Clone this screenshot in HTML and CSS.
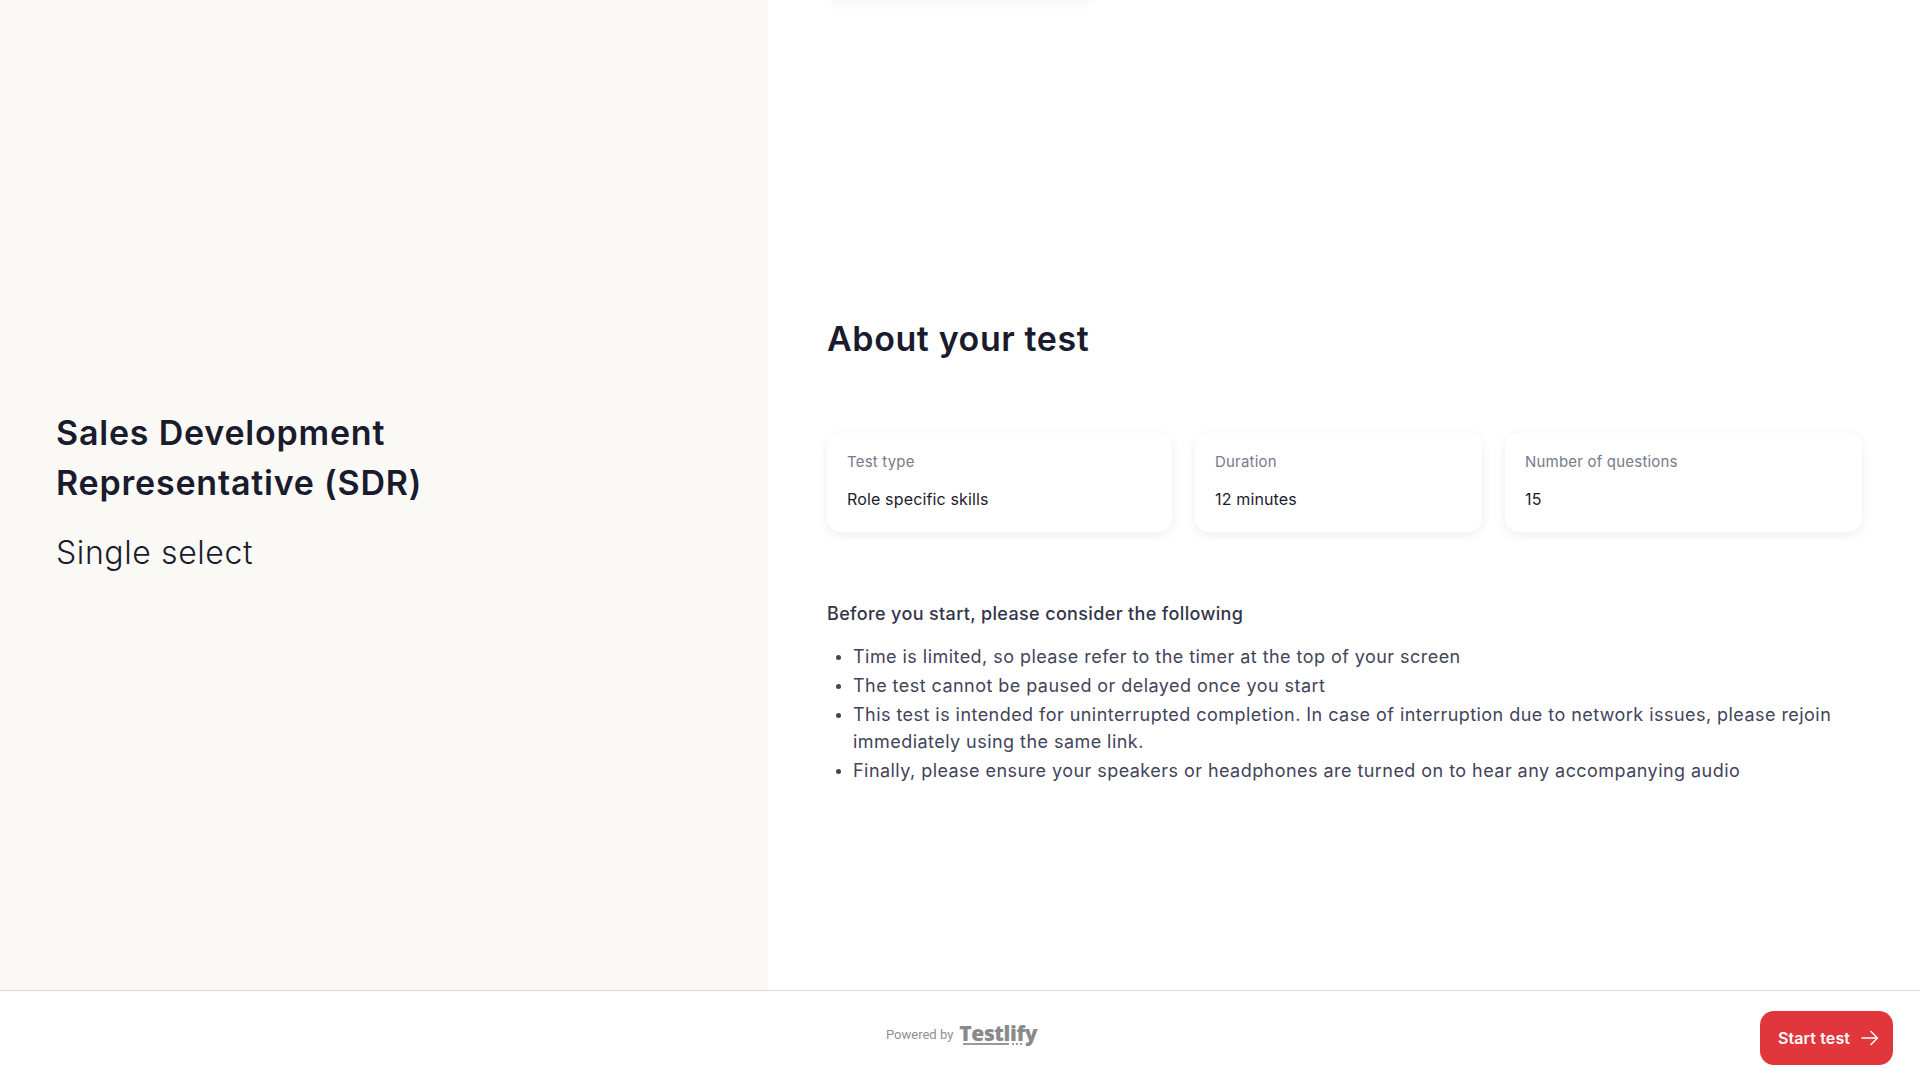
FILE: index.html
```html
<!DOCTYPE html>
<html lang="en">
<head>
    <meta charset="UTF-8">
    <title>About your test</title>
    <link rel="stylesheet" href="styles.css">
</head>
<body>
    <div class="main">
        <div class="side">
            <h2>Sales Development Representative (SDR)</h2>
            <p>Single select</p>
        </div>
        <div class="content">
            <div class="top-shadow"></div>
            <h1>About your test</h1>
            <div class="cards">
                <div class="card">
                    <span class="label">Test type</span>
                    <span class="value">Role specific skills</span>
                </div>
                <div class="card">
                    <span class="label">Duration</span>
                    <span class="value">12 minutes</span>
                </div>
                <div class="card">
                    <span class="label">Number of questions</span>
                    <span class="value">15</span>
                </div>
            </div>
            <h3>Before you start, please consider the following</h3>
            <ul>
                <li>Time is limited, so please refer to the timer at the top of your screen</li>
                <li>The test cannot be paused or delayed once you start</li>
                <li>This test is intended for uninterrupted completion. In case of interruption due to network issues, please rejoin immediately using the same link.</li>
                <li>Finally, please ensure your speakers or headphones are turned on to hear any accompanying audio</li>
            </ul>
        </div>
    </div>
    <div class="footer">
        <div class="powered">
            <span class="powered-by">Powered by</span>
            <span class="logo">Testlify</span>
        </div>
        <button class="start">
            Start test
            <svg width="18" height="18" viewBox="0 0 18 18" fill="none" stroke="#fff" stroke-width="1.5" stroke-linecap="round" stroke-linejoin="round"><path d="M1 9h15.5M10 2.5 16.5 9 10 15.5"/></svg>
        </button>
    </div>
</body>
</html>
```
FILE: styles.css
```css
* {
    margin: 0;
    padding: 0;
    box-sizing: border-box;
}

body {
    font-family: 'Inter', 'Open Sans', sans-serif;
    background: #fff;
    color: #1a1c2e;
    height: 1080px;
    overflow: hidden;
}

.main {
    display: flex;
    height: 990px;
}

/* Left panel */
.side {
    width: 768px;
    background: #fbf9f6;
    padding: 0 56px 4px;
    display: flex;
    flex-direction: column;
    justify-content: center;
}

.side h2 {
    font-size: 34px;
    line-height: 50px;
    font-weight: 600;
    letter-spacing: 0.8px;
    width: 440px;
    margin-bottom: 20px;
}

.side p {
    font-size: 32px;
    line-height: 50px;
    font-weight: 300;
    letter-spacing: 0.6px;
}

/* Right panel */
.content {
    position: relative;
    flex: 1;
    padding: 316px 58px 0 59px;
}

.top-shadow {
    position: absolute;
    top: -20px;
    left: 62px;
    width: 262px;
    height: 20px;
    box-shadow: 0 2px 12px rgba(0, 0, 0, 0.05);
}

.content h1 {
    font-size: 34px;
    line-height: 46px;
    font-weight: 600;
    letter-spacing: 0.6px;
    margin-bottom: 71px;
}

.cards {
    display: grid;
    grid-template-columns: 345fr 287fr 357fr;
    gap: 23px;
    margin-bottom: 69px;
}

.card {
    height: 99px;
    padding: 18px 20px;
    border-radius: 14px;
    background: #fff;
    box-shadow: 0 3px 12px rgba(0, 0, 0, 0.07);
    display: flex;
    flex-direction: column;
    gap: 15px;
}

.label {
    font-size: 15px;
    line-height: 22px;
    letter-spacing: 0.2px;
    color: #777a8c;
}

.value {
    font-size: 16px;
    line-height: 22px;
    font-weight: 400;
    letter-spacing: 0.15px;
}

.content h3 {
    font-size: 18px;
    line-height: 26px;
    font-weight: 500;
    letter-spacing: 0.35px;
    color: #33354a;
    margin-bottom: 16px;
}

.content ul {
    padding-left: 26px;
}

.content li {
    font-size: 18px;
    line-height: 27px;
    letter-spacing: 0.45px;
    color: #42445a;
    margin-bottom: 2px;
}

.content li::marker {
    font-size: 15px;
}

/* Footer */
.footer {
    height: 90px;
    border-top: 1px solid #d6dbe3;
    display: flex;
    align-items: center;
    justify-content: flex-end;
    padding: 5px 27px 0 886px;
}

.powered {
    display: flex;
    align-items: center;
    gap: 6px;
    margin-right: auto;
    margin-top: -10px;
}

.powered-by {
    font-family: 'Roboto', sans-serif;
    font-size: 13px;
    color: #8f8f8f;
    margin-top: 3px;
}

.logo {
    position: relative;
    font-family: 'Open Sans', sans-serif;
    font-size: 21px;
    font-weight: 800;
    color: #8a8a8a;
    letter-spacing: -0.4px;
}

/* underline and dots of the wordmark */
.logo::after {
    content: "";
    position: absolute;
    left: 4px;
    bottom: 2px;
    width: 46px;
    height: 2px;
    background: #9a9a9a;
}

.logo::before {
    content: "";
    position: absolute;
    left: 53px;
    bottom: 2px;
    width: 10px;
    height: 2px;
    background: repeating-linear-gradient(90deg, #9a9a9a 0 2px, transparent 2px 4px);
}

.start {
    width: 133px;
    height: 54px;
    padding-left: 4px;
    border: none;
    border-radius: 14px;
    background: #e0363c;
    color: #fff;
    font-family: inherit;
    font-size: 16px;
    font-weight: 600;
    letter-spacing: 0.1px;
    display: flex;
    align-items: center;
    justify-content: center;
    gap: 11px;
}
```
